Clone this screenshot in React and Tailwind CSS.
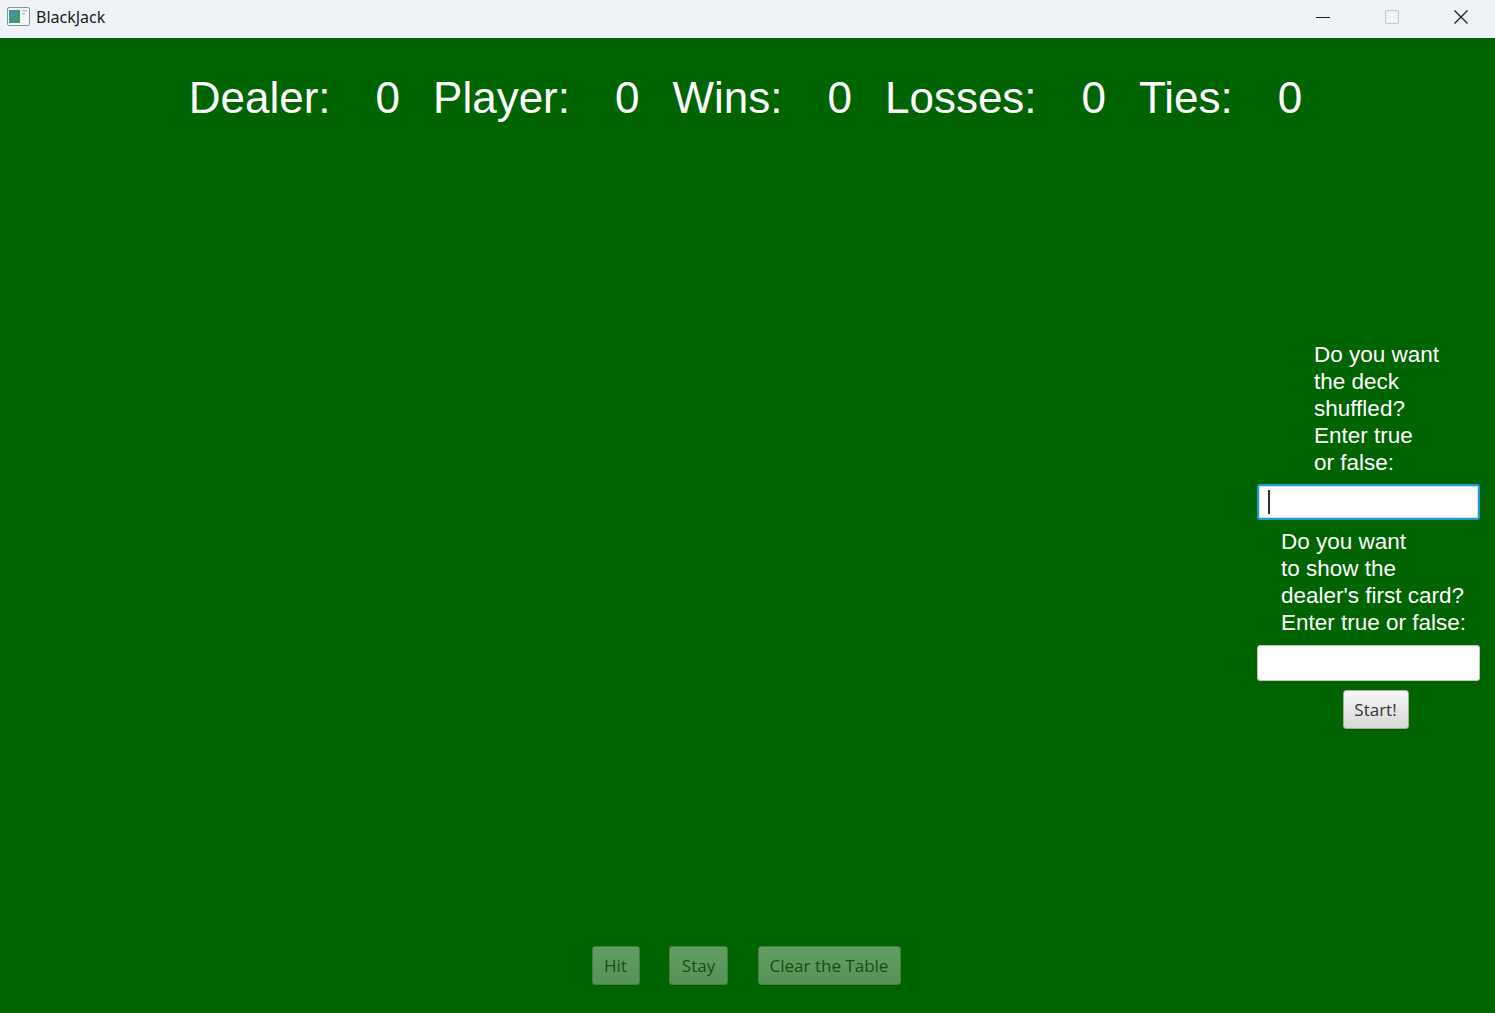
import React from 'react';

const scores = [
  { label: 'Dealer:', value: 0 },
  { label: 'Player:', value: 0 },
  { label: 'Wins:', value: 0 },
  { label: 'Losses:', value: 0 },
  { label: 'Ties:', value: 0 },
];

function AppIcon() {
  return (
    <svg width="23" height="19" viewBox="0 0 23 19">
      <defs>
        <linearGradient id="ig" x1="0" y1="0" x2="1" y2="1">
          <stop offset="0" stopColor="#4a8fb0" />
          <stop offset="1" stopColor="#3f9a5a" />
        </linearGradient>
      </defs>
      <rect x="0.5" y="0.5" width="22" height="18" rx="1.5" fill="#f4f6f8" stroke="#8a939b" />
      <rect x="2" y="3" width="11" height="13" fill="url(#ig)" />
      <rect x="15" y="3" width="5" height="1.5" fill="#b8c0c8" />
      <rect x="15" y="6" width="3" height="1.5" fill="#b8c0c8" />
    </svg>
  );
}

function TitleBar() {
  return (
    <div className="h-[38px] shrink-0 flex items-center pb-[5px] bg-[#eef3f8] select-none">
      <div className="pl-[7px] pr-[6px] flex items-center">
        <AppIcon />
      </div>
      <span className="text-[16px] text-[#1b1b1b] font-['Noto_Sans',sans-serif] leading-none">BlackJack</span>
      <div className="ml-auto flex h-full">
        <div className="w-[69px] flex items-center justify-center">
          <svg width="16" height="16" viewBox="0 0 16 16">
            <line x1="1" y1="8.5" x2="15" y2="8.5" stroke="#1b1b1b" strokeWidth="1" />
          </svg>
        </div>
        <div className="w-[69px] flex items-center justify-center">
          <svg width="16" height="16" viewBox="0 0 16 16">
            <rect x="1.5" y="1.5" width="13" height="13" rx="1.5" fill="none" stroke="#c4c8cc" strokeWidth="1" />
          </svg>
        </div>
        <div className="w-[69px] flex items-center justify-center">
          <svg width="16" height="16" viewBox="0 0 16 16">
            <path d="M1.5 1.5 L14.5 14.5 M14.5 1.5 L1.5 14.5" stroke="#1b1b1b" strokeWidth="1.2" />
          </svg>
        </div>
      </div>
    </div>
  );
}

function TextField({ focused }) {
  return (
    <div
      className={
        focused
          ? 'w-[223px] h-[36px] rounded-[3px] border-[2px] border-[#1e9ad6] bg-white shadow-[inset_0_0_0_1px_#cfe9f6] flex items-center px-[9px]'
          : 'w-[223px] h-[36px] rounded-[3px] border border-[#c2c2c2] bg-white shadow-[inset_0_1px_2px_rgba(0,0,0,0.08)]'
      }
    >
      {focused && <div className="w-[2px] h-[24px] bg-[#333]" />}
    </div>
  );
}

function FxButton({ children, width, disabled }) {
  return (
    <button
      className={`${width} h-[39px] rounded-[3px] border border-[#a8a8a8] bg-gradient-to-b from-[#f5f5f5] to-[#d8d8d8] shadow-[0_1px_0_rgba(0,0,0,0.15)] text-[17px] text-[#333] font-['Open_Sans',sans-serif] leading-none flex items-center justify-center ${disabled ? 'opacity-40' : ''}`}
    >
      {children}
    </button>
  );
}

export default function App() {
  return (
    <div className="w-[1495px] h-[1013px] flex flex-col overflow-hidden">
      <TitleBar />
      <div className="flex-1 flex flex-col bg-[#006400] text-white">
        {/* Score header */}
        <div className="pt-[38px] pr-[4px] flex justify-center gap-[33px] text-[44px] leading-none font-['Liberation_Sans',Arial,sans-serif]">
          {scores.map((s) => (
            <div key={s.label} className="flex">
              <span className="pr-[45px]">{s.label}</span>
              <span>{s.value}</span>
            </div>
          ))}
        </div>

        {/* Table area + setup panel */}
        <div className="flex-1 flex justify-end pt-[221px] pr-[15px]">
          <div className="w-[223px] flex flex-col font-['Liberation_Sans',Arial,sans-serif] text-[22.5px] leading-[27px]">
            <div className="pl-[57px]">
              Do you want<br />the deck<br />shuffled?<br />Enter true<br />or false:
            </div>
            <div className="mt-[8px]">
              <TextField focused />
            </div>
            <div className="mt-[8px] pl-[24px]">
              Do you want<br />to show the<br />dealer's first card?<br />Enter true or false:
            </div>
            <div className="mt-[9px]">
              <TextField />
            </div>
            <div className="mt-[9px] flex justify-center pl-[14px]">
              <FxButton width="w-[66px]">Start!</FxButton>
            </div>
          </div>
        </div>

        {/* Action buttons */}
        <div className="pb-[28px] pr-[3px] flex justify-center gap-[29.5px]">
          <FxButton width="w-[48px]" disabled>Hit</FxButton>
          <FxButton width="w-[59px]" disabled>Stay</FxButton>
          <FxButton width="w-[143px]" disabled>Clear the Table</FxButton>
        </div>
      </div>
    </div>
  );
}
